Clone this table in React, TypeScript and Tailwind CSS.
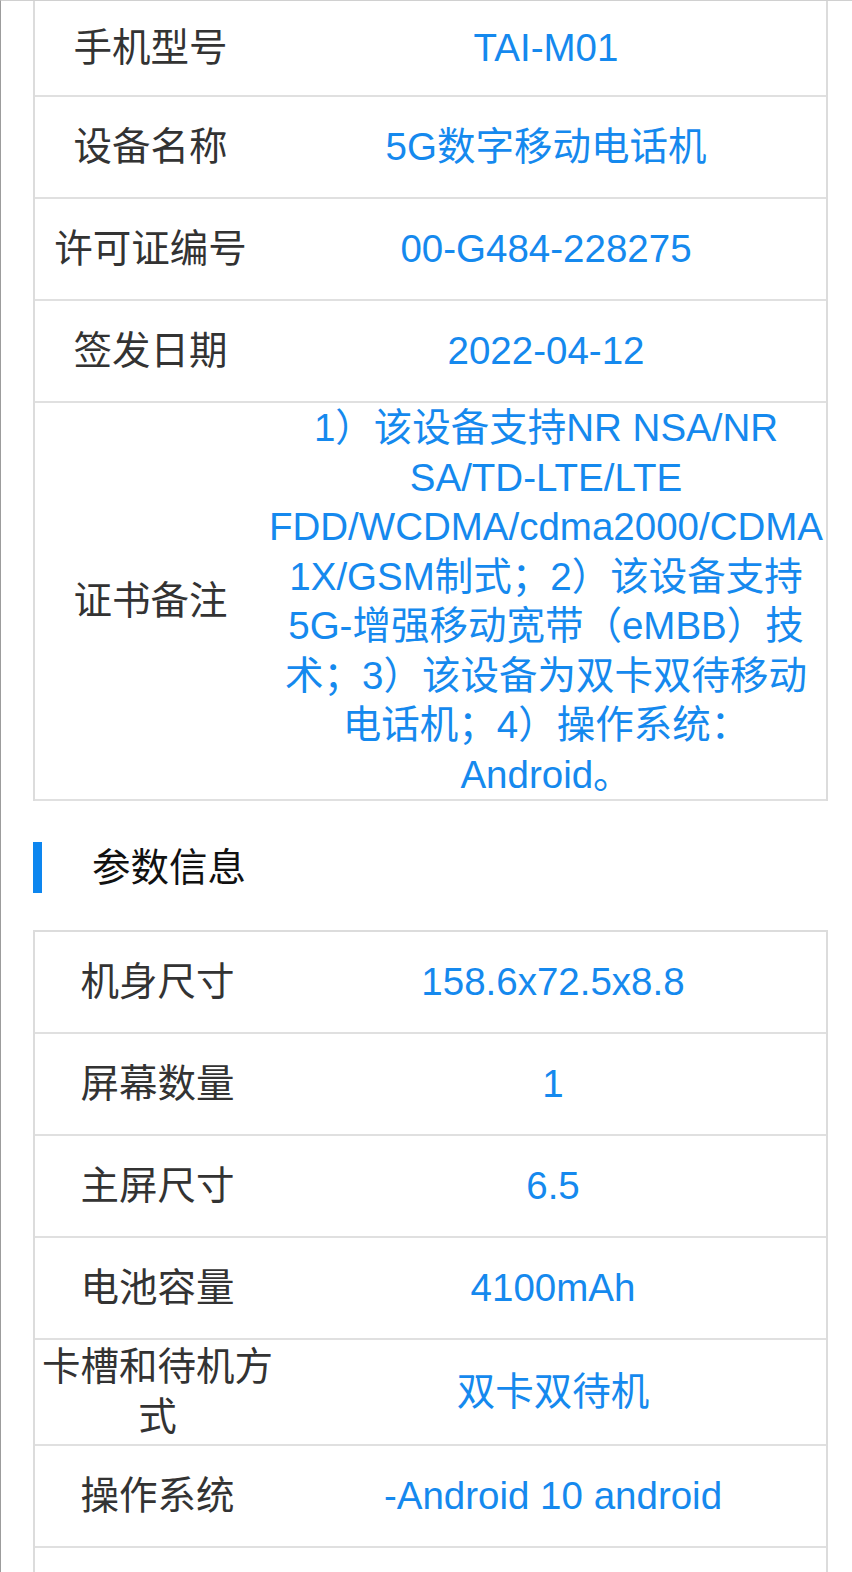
const font = "font-['Liberation_Sans','Noto_Sans_CJK_SC',sans-serif]"

interface Row {
    label: string
    value: string
    h?: string
}

const basic: Row[] = [
    { label: "手机型号", value: "TAI-M01", h: "h-[96px]" },
    { label: "设备名称", value: "5G数字移动电话机" },
    { label: "许可证编号", value: "00-G484-228275" },
    { label: "签发日期", value: "2022-04-12" },
]

const remark =
    "1）该设备支持NR NSA/NR SA/TD-LTE/LTE FDD/WCDMA/cdma2000/CDMA 1X/GSM制式；2）该设备支持5G-增强移动宽带（eMBB）技术；3）该设备为双卡双待移动电话机；4）操作系统：Android。"

const params: Row[] = [
    { label: "机身尺寸", value: "158.6x72.5x8.8" },
    { label: "屏幕数量", value: "1" },
    { label: "主屏尺寸", value: "6.5" },
    { label: "电池容量", value: "4100mAh" },
    { label: "卡槽和待机方式", value: "双卡双待机", h: "h-[106px]" },
    { label: "操作系统", value: "-Android 10 android" },
    { label: "", value: "" },
]

function InfoRow({ row, labelW }: { row: Row; labelW: string }) {
    return (
        <div className={`flex border-b-2 border-[#e0e0e0] ${row.h ?? "h-[102px]"}`}>
            <div className={`${labelW} shrink-0 flex items-center justify-center text-center leading-[50px] text-[#333]`}>
                {row.label}
            </div>
            <div className="flex-1 flex items-center justify-center text-center leading-[50px] text-[#1589ee]">
                {row.value}
            </div>
        </div>
    )
}

export default function App() {
    return (
        <div className={`${font} min-h-screen bg-white border-t border-t-[#d0d0d0] border-l border-l-[#9c9c9c] text-[38.5px] overflow-hidden`}>
            <div className="ml-[32px] w-[795px]">
                {/* 基本信息 */}
                <div className="border-x-2 border-[#dcdcdc]">
                    {basic.map((r) => (
                        <InfoRow key={r.label} row={r} labelW="w-[231px]" />
                    ))}
                    <div className="flex border-b-2 border-[#e0e0e0]">
                        <div className="w-[231px] shrink-0 flex items-center justify-center text-[#333]">
                            证书备注
                        </div>
                        <div className="w-[560px] shrink-0 text-center leading-[49.5px] text-[#1589ee]">
                            {remark}
                        </div>
                    </div>
                </div>

                <div className="flex items-center pt-[41px] pb-[37px]">
                    <div className="w-[9px] h-[51px] bg-[#0d86ef]" />
                    <span className="ml-[50px] text-[#111] leading-[50px]">参数信息</span>
                </div>

                {/* 参数信息 */}
                <div className="border-x-2 border-t-2 border-[#dcdcdc]">
                    {params.map((r, i) => (
                        <InfoRow key={i} row={r} labelW="w-[245px]" />
                    ))}
                </div>
            </div>
        </div>
    )
}
